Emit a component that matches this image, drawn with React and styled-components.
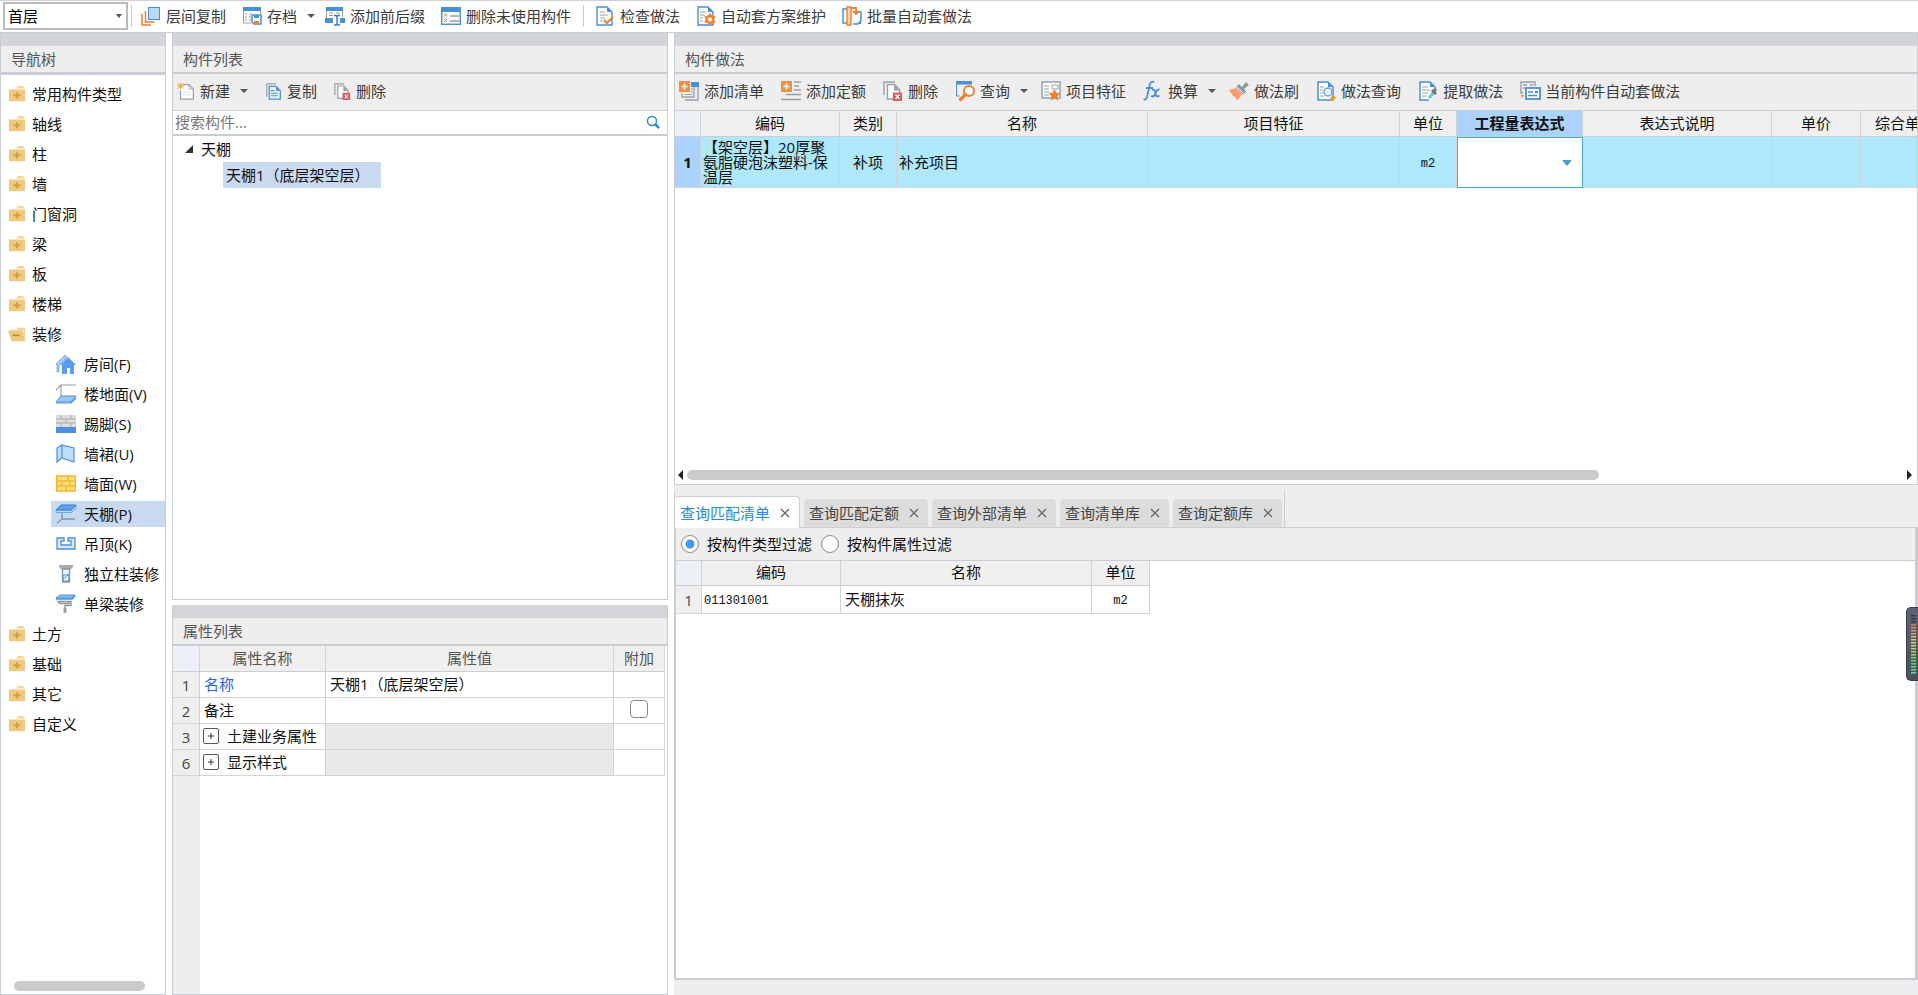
import React from 'react';
import styled, { createGlobalStyle, css } from 'styled-components';

const c = {
  line: '#c9cdd4',
  grid: '#d0d3d8',
  band: '#d3d5db',
  bar: '#eeeeee',
  select: '#c8d9f0',
  blue: '#4a8fdc',
  sky: '#b9d9fb',
  orange: '#f07f2e',
  gray: '#98a0a6',
};

const Global = createGlobalStyle`
  *, *::before, *::after { box-sizing: border-box; }
  body { margin: 0; background: #fff; }
  body, button, input, select, table {
    font-family: "Open Sans", "Noto Sans CJK SC", sans-serif;
    font-size: 15px;
    color: #111;
  }
  button { border: 0; padding: 0; background: none; white-space: nowrap; text-align: left; }
  ul { list-style: none; margin: 0; padding: 0; }
`;

/* ---------- page frame ---------- */
const Page = styled.div`
  height: 100vh;
  display: flex;
  flex-direction: column;
  overflow: hidden;
  border-top: 1px solid #cfd2d9;
`;
const TopBar = styled.header`
  flex: none;
  height: 32px;
  display: flex;
  align-items: center;
  padding: 0 0 1px 3px;
  border-bottom: 1px solid ${c.line};
`;
const Main = styled.main`
  flex: 1;
  min-height: 0;
  display: grid;
  grid-template-columns: 166px 496px minmax(0, 1fr);
  column-gap: 6px;
`;
const Stack = styled.div`
  min-height: 0;
  min-width: 0;
  display: grid;
  grid-template-rows: minmax(0, ${(p) => p.$top}fr) minmax(0, ${(p) => p.$bottom}fr);
  row-gap: ${(p) => p.$gap}px;
`;
const Panel = styled.section`
  min-height: 0;
  min-width: 0;
  overflow: hidden;
  display: flex;
  flex-direction: column;
  border: 1px solid ${c.line};
  border-top: 0;
`;
const Title = styled.h2`
  flex: none;
  margin: 0;
  height: ${(p) => (p.$heavy ? 42 : 41)}px;
  padding-left: 10px;
  border-top: 13px solid ${c.band};
  border-bottom: ${(p) => (p.$heavy ? 3 : 2)}px solid ${c.line};
  background: ${c.bar};
  color: #555;
  font-size: 15px;
  font-weight: 400;
  line-height: 26px;
`;

/* ---------- tool buttons ---------- */
const Tools = styled.div`
  flex: none;
  height: 37px;
  display: flex;
  align-items: center;
  gap: ${(p) => p.$gap || 0}px;
  padding: 0 0 2px ${(p) => (p.$gap ? 5 : 0)}px;
  background: ${c.bar};
  border-bottom: 1px solid ${c.line};
`;
const ToolButton = styled.button`
  flex: none;
  display: flex;
  align-items: center;
  gap: 5px;
  height: 28px;
  padding: 0 ${(p) => p.$end}px 0 ${(p) => p.$start}px;
  color: #3c3c3c;
  line-height: 20px;
`;
const Caret = styled.span`
  margin-left: 5px;
  border: 4px solid transparent;
  border-top: 4px solid #555;
  border-bottom: 0;
`;
const Divider = styled.span`
  width: 1px;
  height: 22px;
  margin: 0 ${(p) => p.$space}px;
  background: #c9c9cc;
`;
const Picker = styled.span`
  display: grid;
  align-items: center;
  width: ${(p) => p.$width};
  height: ${(p) => p.$height};
  background: #fff;
  border: ${(p) => (p.$cell ? '1px solid #4aabd6' : '2px solid #b9bcbf')};
  & > * { grid-area: 1 / 1; }
  & > select {
    width: 100%;
    height: 100%;
    padding: 0 3px;
    border: 0;
    appearance: none;
    background: transparent;
    color: #000;
  }
  & > i {
    justify-self: end;
    margin-right: ${(p) => (p.$cell ? 10 : 4)}px;
    border: ${(p) => (p.$cell ? 5 : 3)}px solid transparent;
    border-top: ${(p) => (p.$cell ? '6px solid #4d9bcb' : '4px solid #555')};
    border-bottom: 0;
    pointer-events: none;
  }
`;

/* ---------- navigation ---------- */
const NavScroll = styled.nav`
  flex: 1;
  min-height: 0;
  overflow: hidden;
  padding-top: 6px;
`;
const NavList = styled.ul`
  display: flex;
  flex-direction: column;
  gap: 4px;
  & & { margin-top: 4px; }
`;
const NavItem = styled.button`
  display: flex;
  align-items: center;
  gap: ${(p) => (p.$child ? 8 : 6)}px;
  height: 26px;
  margin-left: ${(p) => (p.$child ? 50 : 0)}px;
  padding-left: ${(p) => (p.$child ? 5 : 7)}px;
  width: ${(p) => (p.$child ? 'calc(100% - 50px)' : '100%')};
  background: ${(p) => (p.$active ? c.select : 'transparent')};
  line-height: 20px;
`;
const NavTrack = styled.div`
  flex: none;
  padding: 0 20px 3px 13px;
`;
const Thumb = styled.div`
  height: 10px;
  border-radius: 5px;
  background: #cbcbcb;
  ${(p) => p.$share && css`width: ${p.$share};`}
`;

/* ---------- component list ---------- */
const Search = styled.label`
  flex: none;
  height: 25px;
  display: flex;
  align-items: center;
  padding: 0 7px 1px 2px;
  border-bottom: 2px solid ${c.line};
  & > input {
    flex: 1;
    min-width: 0;
    padding: 0;
    border: 0;
    outline: 0;
    line-height: 20px;
  }
  & > input::placeholder { color: #777; opacity: 1; }
`;
const TreeRow = styled.button`
  display: flex;
  align-items: center;
  gap: 7px;
  height: 26px;
  line-height: 20px;
  margin-left: ${(p) => (p.$leaf ? 50 : 11)}px;
  padding-left: ${(p) => (p.$leaf ? 3 : 0)}px;
  width: ${(p) => (p.$leaf ? '158px' : 'auto')};
  background: ${(p) => (p.$leaf ? c.select : 'transparent')};
`;

/* ---------- tables ---------- */
const Scroller = styled.div`
  flex: 1;
  min-height: 0;
  overflow: hidden;
  ${(p) => p.$gutter && css`background: linear-gradient(to right, ${c.bar} 27px, #fff 27px);`}
`;
const Table = styled.table`
  table-layout: fixed;
  border-collapse: separate;
  border-spacing: 0;
  width: ${(p) => p.$width};
  line-height: 20px;
`;
const Head = styled.th`
  height: ${(p) => p.$h}px;
  padding: 0 0 2px;
  background: ${(p) => (p.$on ? '#abd3fd' : p.$corner ? '#edf1f7' : '#efefef')};
  border-right: 1px solid ${c.grid};
  border-bottom: 1px solid ${c.line};
  color: ${(p) => (p.$soft ? '#555' : '#111')};
  font-weight: ${(p) => (p.$on ? 700 : 400)};
  white-space: nowrap;
`;
const RowNo = styled.th`
  padding: 0;
  background: ${(p) => (p.$on ? '#abd3fd' : '#efefef')};
  border-right: 1px solid ${c.grid};
  border-bottom: 1px solid ${c.grid};
  color: ${(p) => (p.$on ? '#111' : '#444')};
  font-weight: ${(p) => (p.$on ? 700 : 400)};
`;
const Cell = styled.td`
  height: ${(p) => p.$h}px;
  padding: 0 2px;
  background: ${(p) => p.$fill || '#fff'};
  border-right: 1px solid ${c.grid};
  border-bottom: 1px solid ${c.grid};
  text-align: ${(p) => (p.$center ? 'center' : 'left')};
  ${(p) => p.$tight && css`line-height: 15px;`}
  ${(p) => p.$bare && css`padding: 0; border: 0;`}
`;
const Mono = styled.span`
  font-family: "Liberation Mono", monospace;
  font-size: 12px;
`;
const PropName = styled.span`
  display: flex;
  align-items: center;
  gap: 8px;
  padding: 0 0 2px ${(p) => (p.$group ? 1 : 2)}px;
  color: ${(p) => (p.$link ? '#2a63f6' : '#111')};
`;
const Expand = styled.button`
  display: grid;
  width: 16px;
  height: 16px;
  place-items: center;
  border: 1px solid #555;
  border-radius: 2px;
  & > svg { display: block; }
`;
const Check = styled.input`
  appearance: none;
  display: block;
  width: 18px;
  height: 18px;
  margin: 0 auto 3px;
  border: 1px solid #888;
  border-radius: 4px;
  background: #fff;
`;
const HScroll = styled.div`
  flex: none;
  height: 17px;
  display: flex;
  align-items: center;
  gap: 4px;
  padding: 0 5px 1px 3px;
`;
const Track = styled.div`
  flex: 1;
`;
const ArrowEnd = styled.span`
  border: 5px solid transparent;
  border-left-width: 0;
  border-right-width: 0;
  ${(p) => (p.$right ? 'border-left: 5px solid #222;' : 'border-right: 5px solid #222;')}
`;

/* ---------- query area ---------- */
const Lower = styled.section`
  min-height: 0;
  display: flex;
  flex-direction: column;
  background: ${c.bar};
  padding-bottom: 15px;
`;
const TabStrip = styled.div`
  flex: none;
  display: flex;
  height: 43px;
  padding-top: 6px;
  border-bottom: 1px solid ${c.line};
`;
const Tabs = styled.div`
  display: flex;
  align-items: flex-end;
  gap: 4px;
  padding-right: 2px;
  border-left: 1px solid ${c.line};
  border-right: 1px solid ${c.line};
`;
const Tab = styled.div`
  display: flex;
  align-items: center;
  gap: 10px;
  height: ${(p) => (p.$active ? 32 : 28)}px;
  padding: 0 9px 0 5px;
  border-radius: 4px 4px 0 0;
  background: ${(p) => (p.$active ? '#fff' : '#dcdcdc')};
  ${(p) => p.$active && css`margin-bottom: -1px; border: 1px solid ${c.line}; border-width: 1px 1px 0 0;`}
  & > button { line-height: 20px; color: ${(p) => (p.$active ? '#2a86e8' : '#444')}; }
  & > button + button { height: 16px; }
`;
const Results = styled.div`
  flex: 1;
  min-height: 0;
  display: flex;
  flex-direction: column;
  border: 2px solid ${c.line};
  border-width: 0 3px 2px 2px;
  background: #fff;
`;
const Filters = styled.div`
  flex: none;
  display: flex;
  align-items: center;
  gap: 9px;
  height: 33px;
  padding-left: 5px;
  background: ${c.bar};
  border-bottom: 1px solid ${c.line};
`;
const Radio = styled.label`
  display: flex;
  align-items: center;
  gap: 8px;
  line-height: 20px;
  & > input {
    appearance: none;
    width: 18px;
    height: 18px;
    margin: 0;
    border: 1px solid #888;
    border-radius: 50%;
    background: #fff;
  }
  & > input:checked { background: radial-gradient(circle, #3f97f6 0 4px, #fff 5px); }
`;
const Meter = styled.aside`
  position: fixed;
  right: 0;
  top: 61%;
  width: 12px;
  height: 74px;
  display: flex;
  justify-content: flex-end;
  align-items: center;
  padding-right: 2px;
  border: 1px solid #3c404e;
  border-right: 0;
  border-radius: 5px 0 0 5px;
  background: linear-gradient(#5d6375, #4c515d);
`;

/* ---------- drawings ---------- */
const doc = 'M2 1h10l5 5v13H2z';
const ICONS = {
  layers: <><path d="M1 8v11h9M4.500 5v11h9" fill="none" stroke={c.orange} strokeWidth="1.500" /><rect x="7.500" y="1.500" width="11" height="12" fill={c.sky} stroke={c.blue} /></>,
  archive: <><path d="M1 1h18v4H1z" fill={c.blue} /><path d="M1.500 5v12H9M18.500 5v3M3 8h2m2 0h3M3 11h2m2 0h2M3 14h2m2 0h2" fill="none" stroke={c.gray} /><path d="M10 9h9v9h-7l-2-2z" fill="#fff" stroke={c.blue} strokeWidth="1.500" /><path d="M12 9h5v3h-5z" fill={c.blue} /><path d="M12 15h5v3h-5z" fill={c.orange} /></>,
  affix: <><path d="M1 1h17v4H1z" fill={c.blue} /><path d="M1.500 5v7M17.500 5v6M4 7h4m3 0h4M4 9.500h4" fill="none" stroke={c.gray} /><path d="M0 12h8v5H0zM15 12h5v5h-5z" fill={c.blue} /><path d="M9 9.500h2l1 1 1-1h2M9 19h2l1-1 1 1h2M12 10v9" fill="none" stroke="#2f78c8" strokeWidth="1.400" /></>,
  unused: <><rect x=".7" y="1.700" width="18.600" height="16.600" fill="#f6fafe" stroke={c.blue} strokeWidth="1.400" /><path d="M0 1h20v5H0z" fill={c.blue} /><path d="M3 7.500l3 3m0-3l-3 3M3 13l3 3m0-3l-3 3" stroke={c.orange} /><path d="M9 10h9M9 15h9" stroke={c.gray} strokeWidth="1.300" /></>,
  check: <><path d={doc} fill="#fff" stroke={c.blue} strokeWidth="1.400" /><path d="M12 1v5h5z" fill={c.blue} /><path d="M5 6h5M5 9h8M5 12h5M5 15h3" stroke={c.gray} /><path d="M9 14l3 3 6-6" fill="none" stroke={c.orange} strokeWidth="2" /></>,
  gear: <><path d={doc} fill="#fff" stroke={c.blue} strokeWidth="1.400" /><path d="M12 1v5h5z" fill={c.blue} /><path d="M4 6h6M4 9h5M4 12h3M4 15h3" stroke={c.gray} /><circle cx="14" cy="13.500" r="3.500" fill="#fff" stroke={c.orange} strokeWidth="2.400" /><path d="M14 7.500v12M8.800 10.500l10.400 6M8.800 16.500l10.400-6" stroke={c.orange} strokeWidth="2" /><circle cx="14" cy="13.500" r="2" fill="#fff" /></>,
  batch: <><path d="M5 3H1v14h4M14 6h5v9l-3 3h-5" fill="none" stroke={c.blue} strokeWidth="1.500" /><path d="M19 14v4h-4z" fill={c.blue} /><path d="M5 1h4v18H5z" fill="#fbd6b8" stroke={c.orange} strokeWidth="1.400" /><path d="M9 2h5v6m-3-3l3 3 3-3" fill="none" stroke={c.orange} strokeWidth="1.800" /></>,
  create: <><path d="M6 2h7l5 5v12H3V9" fill="#fff" stroke={c.gray} strokeWidth="1.400" /><path d="M13 2v5h5" fill="none" stroke={c.gray} /><path d="M6 11h9M6 14h9" stroke="#dde1e4" /><path d="M3 0v7M-1 3.500h8M0 .500l6 6M6 .500l-6 6" stroke="#f59a23" strokeWidth="1.100" /></>,
  copy: <><path d="M2 16V1h11" fill="none" stroke={c.gray} strokeWidth="1.400" /><path d="M5 4h8l5 5v10H5z" fill="#eaf4ff" stroke={c.blue} strokeWidth="1.500" /><path d="M13 4v5h5z" fill={c.blue} /><path d="M7 9h4M7 12h8M7 15h8" stroke={c.blue} strokeWidth="1.300" /></>,
  remove: <><path d="M1 14V1h11" fill="none" stroke={c.gray} strokeWidth="1.400" /><path d="M4.500 3.500h7l5 5V18h-12z" fill="#fff" stroke={c.gray} strokeWidth="1.400" /><path d="M11 3.500v6h5.500z" fill={c.gray} /><path d="M10 11.500h9V20h-9z" fill="#dc5a5f" /><path d="M12.500 13.500l4 4.500m0-4.500l-4 4.500" stroke="#fff" strokeWidth="1.200" /></>,
  addList: <><path d="M12 1h8v5h-8z" fill={c.blue} /><path d="M6 19h13V6M3 12v4h12V6" fill="none" stroke={c.gray} strokeWidth="1.300" /><path d="M6 13.500h7M12 8h2m-2 3h2" stroke={c.gray} /><path d="M0 0h11v11H0z" fill="#f0913f" /><path d="M5.500 2.500v6M2.500 5.500h6" stroke="#fff" strokeWidth="1.500" /></>,
  addQuota: <><path d="M13 1h7M13 5h5M13 9h7M5 13.500h15M0 18.500h20" stroke={c.gray} strokeWidth="1.500" /><path d="M0 0h11v11H0z" fill="#f0913f" /><path d="M5.500 2.500v6M2.500 5.500h6" stroke="#fff" strokeWidth="1.500" /></>,
  query: <><path d="M1 0h16v3.500H1z" fill={c.blue} /><path d="M1.500 3v12h3" fill="none" stroke={c.blue} /><circle cx="14" cy="10" r="5" fill="#fff" stroke={c.orange} strokeWidth="2" /><path d="M10.500 13.500l-5 5" stroke={c.orange} strokeWidth="3.200" strokeLinecap="round" /></>,
  feature: <><rect x="1" y="1" width="18" height="16" fill="#fff" stroke={c.gray} strokeWidth="1.500" /><path d="M3 5h5M3 8h5M3 11h5M3 14h5M11 4h6v4h-6z" fill="none" stroke={c.gray} /><path d="M13.500 8l1.800 3.800 4.200.5-3.100 2.900.8 4.200-3.700-2-3.700 2 .8-4.200-3.100-2.900 4.200-.5z" fill={c.orange} /></>,
  fx: <path d="M11 1.500c-2-2-4 0-4.500 3L4 16c-.5 2.500-2 3-3.500 2M3 7h7M9 9c3-1.500 3 1 3.500 3.500s1.500 4 4 2M16.500 8.500c-3-.5-3.500 3-4.500 5s-2 2.500-4 1.500" fill="none" stroke={c.blue} strokeWidth="1.800" />,
  brush: <><path d="M0 9l7-2 6 6-4 6-2-1-1-2-2-1z" fill="#ff9a6c" /><path d="M7 6l3-3 3 3 4-5 3 3-5 4 2 3-3 3z" fill="#8a98a2" /><path d="M8 6l7 7" stroke="#eee" /></>,
  docQuery: <><path d={doc} fill="#fff" stroke={c.blue} strokeWidth="1.500" /><path d="M12 1v5h5z" fill={c.blue} /><path d="M4 6h4M4 9h3M4 12h3M4 15h4" stroke={c.gray} /><circle cx="12" cy="11" r="4" fill="#eaf4ff" stroke="#6ba0dc" strokeWidth="1.400" /><path d="M17 14l3 3-3 3-3-3z" fill="#f6971f" /></>,
  extract: <><path d="M17 9V6l-5-5H2v18h9" fill="#fff" stroke={c.blue} strokeWidth="1.500" /><path d="M12 1v5h5z" fill={c.blue} /><path d="M4 6h6M4 9h8M4 12h6M4 15h5" stroke={c.gray} /><path d="M11 17l5-6" stroke="#6cc7cf" strokeWidth="3" /><path d="M14 9l4 4M15 11l3-3" stroke="#68767f" strokeWidth="3" /></>,
  current: <><path d="M3 12H1V1h14v4M3 4h4m3 0h3M3 7h2" fill="none" stroke={c.gray} strokeWidth="1.400" /><path d="M1 14l3 0-2 3z" fill={c.orange} /><rect x="6" y="7" width="14" height="11" fill="#fff" stroke={c.blue} strokeWidth="1.800" /><path d="M8 11h5M8 14.500h9" stroke={c.blue} strokeWidth="1.500" /><path d="M15 10h3v2h-3z" fill={c.blue} /></>,
  folder: <><path d="M11 1h6l2 3H9z" fill="#f3d596" /><path d="M1 5h18v13H1z" fill="#efc97f" /><path d="M10 8v7M6 11.500h8" stroke="#cf9f3f" strokeWidth="2" /></>,
  folderOpen: <><path d="M10 3h9v13h-2V6H3V5h7z" fill="#f3d596" /><path d="M0 6h16l3 12H4z" fill="#efc97f" /><path d="M5 11.500h8" stroke="#b98a34" strokeWidth="1.800" /></>,
  house: <><path d="M0 10l9-9 2 2-8 8v7H1v-7z" fill="#a9cdf6" stroke="#6aa5ea" strokeWidth=".8" /><path d="M12 3l8 8h-2v9h-4v-6h-3v6H6v-9H4z" fill="#5a9df0" /></>,
  floor: <><path d="M0 6l5-5h15M5 1v11" fill="none" stroke="#98a0a6" strokeWidth="1.200" /><path d="M5 12h15l-5 6H0z" fill="#9cc8f7" stroke={c.blue} /><path d="M0 19h15l5-5" fill="none" stroke={c.blue} strokeWidth="1.200" /></>,
  skirting: <><path d="M0 1h20v12H0z" fill="#dcdcdc" /><path d="M0 5h20M0 9h20M5 1v4M15 1v4M10 5v4M5 9v4M15 9v4" stroke="#aaa" /><path d="M0 13h20v6H0z" fill="#4a90e2" /></>,
  dado: <path d="M6 1v13l-5 4V4zM6 1l12 3v14L6 14z" fill="#bfdcfb" stroke={c.blue} strokeWidth="1.200" />,
  wall: <><path d="M.7 2h18.600v15H.7z" fill="#ffdf85" stroke="#f5b52a" strokeWidth="1.400" /><path d="M0 7h20M0 12h20M12 2v5M6 7v5M14 7v5M10 12v5" stroke="#f5b52a" strokeWidth="1.400" /></>,
  ceiling: <><path d="M5 1h15l-5 5H0z" fill="#5fa2ea" stroke="#2f7fd0" /><path d="M0 6.500h15l5-5v3l-5 4H0z" fill="#b9d9fb" stroke={c.blue} strokeWidth=".7" /><path d="M6 9v6l-5 4M6 15h13" fill="none" stroke="#8297a8" strokeWidth="1.400" /></>,
  drop: <path d="M1 4h7v3H5v4h10V7h-3V4h7v11H1z" fill="#d9eafd" stroke={c.blue} strokeWidth="1.300" />,
  column: <><path d="M3 1h14v2l-3 3H6L3 3z" fill="#a7adb2" /><path d="M6.500 5h7v13h-7z" fill="#edf5fe" stroke="#8a949c" strokeWidth="1.300" /><path d="M7 11h6v6H7zM7 15l6-5" fill="none" stroke={c.blue} /></>,
  beam: <><path d="M4 1h15l-3 3H0z" fill="#8fc1f5" stroke={c.blue} /><path d="M0 5h16l3-3" fill="none" stroke={c.blue} strokeWidth="1.500" /><path d="M2 7.500h11v2H4zM13 7.500h2v4H9v3" fill="none" stroke="#8e969c" strokeWidth="1.400" /><path d="M7.500 14h3v5h-3z" fill="#98a0a6" /></>,
};
const Svg = styled.svg`
  flex: none;
  display: block;
  overflow: visible;
`;
const Icon = ({ name, size = 20 }) => (
  <Svg width={size} height={size} viewBox="0 0 20 20" aria-hidden="true">{ICONS[name]}</Svg>
);

const Tool = ({ icon, label, drop, size, start = 0, end = 0 }) => (
  <ToolButton type="button" $start={start} $end={drop ? Math.max(end - 4, 0) : end}>
    <Icon name={icon} size={size} />
    {label}
    {drop && <Caret />}
  </ToolButton>
);

const NAV = [
  ['常用构件类型'], ['轴线'], ['柱'], ['墙'], ['门窗洞'], ['梁'], ['板'], ['楼梯'],
  ['装修', [
    ['house', '房间(F)'], ['floor', '楼地面(V)'], ['skirting', '踢脚(S)'], ['dado', '墙裙(U)'], ['wall', '墙面(W)'],
    ['ceiling', '天棚(P)'], ['drop', '吊顶(K)'], ['column', '独立柱装修'], ['beam', '单梁装修'],
  ]],
  ['土方'], ['基础'], ['其它'], ['自定义'],
];
const METHOD_TOOLS = [
  ['addList', '添加清单'], ['addQuota', '添加定额'], ['remove', '删除'], ['query', '查询', true], ['feature', '项目特征'],
  ['fx', '换算', true], ['brush', '做法刷'], ['docQuery', '做法查询'], ['extract', '提取做法'], ['current', '当前构件自动套做法'],
];
const METHOD_COLS = [
  ['', 26], ['编码', 139], ['类别', 57], ['名称', 251], ['项目特征', 252], ['单位', 57],
  ['工程量表达式', 126], ['表达式说明', 189], ['单价', 89], ['综合单价', 89],
];
const TABS = ['查询匹配清单', '查询匹配定额', '查询外部清单', '查询清单库', '查询定额库'];
const PROPS = [
  { no: 1, name: '名称', value: '天棚1（底层架空层）', link: true },
  { no: 2, name: '备注', check: true },
  { no: 3, name: '土建业务属性', group: true },
  { no: 6, name: '显示样式', group: true },
];
const AQUA = '#aee8fa';

function Navigation() {
  return (
    <Panel>
      <Title $heavy>导航树</Title>
      <NavScroll>
        <NavList>
          {NAV.map(([label, children]) => (
            <li key={label}>
              <NavItem type="button">
                <Icon name={children ? 'folderOpen' : 'folder'} size={18} />
                {label}
              </NavItem>
              {children && (
                <NavList>
                  {children.map(([icon, text]) => (
                    <li key={text}>
                      <NavItem type="button" $child $active={icon === 'ceiling'}>
                        <Icon name={icon} />
                        {text}
                      </NavItem>
                    </li>
                  ))}
                </NavList>
              )}
            </li>
          ))}
        </NavList>
      </NavScroll>
      <NavTrack><Thumb /></NavTrack>
    </Panel>
  );
}

function ComponentList() {
  return (
    <Panel>
      <Title>构件列表</Title>
      <Tools $gap={17}>
        <Tool icon="create" label="新建" drop size={17} />
        <Tool icon="copy" label="复制" size={17} />
        <Tool icon="remove" label="删除" size={17} />
      </Tools>
      <Search>
        <input type="text" placeholder="搜索构件..." aria-label="搜索构件" />
        <Svg width="14" height="14" viewBox="0 0 14 14" fill="none" stroke="#2e8fc8">
          <circle cx="6" cy="6" r="4.500" strokeWidth="1.500" />
          <path d="M9 9l4 4" strokeWidth="2.500" />
        </Svg>
      </Search>
      <TreeRow type="button">
        <Svg width="10" height="10" viewBox="0 0 10 10"><path d="M9 1v8H1z" fill="#333" /></Svg>
        天棚
      </TreeRow>
      <TreeRow type="button" $leaf>天棚1（底层架空层）</TreeRow>
    </Panel>
  );
}

function Properties() {
  return (
    <Panel>
      <Title>属性列表</Title>
      <Scroller $gutter>
        <Table $width="calc(100% - 2px)">
          <colgroup>
            <col width="27" /><col width="126" /><col /><col width="51" />
          </colgroup>
          <thead>
            <tr>
              <Head $h={26} $corner />
              <Head $h={26} $soft>属性名称</Head>
              <Head $h={26} $soft>属性值</Head>
              <Head $h={26} $soft>附加</Head>
            </tr>
          </thead>
          <tbody>
            {PROPS.map((p) => (
              <tr key={p.no}>
                <RowNo>{p.no}</RowNo>
                <Cell $h={26}>
                  <PropName $link={p.link} $group={p.group}>
                    {p.group && (
                      <Expand type="button" aria-label={`展开${p.name}`}>
                        <Svg width="8" height="8" viewBox="0 0 8 8"><path d="M4 1v6M1 4h6" stroke="#333" /></Svg>
                      </Expand>
                    )}
                    {p.name}
                  </PropName>
                </Cell>
                <Cell $h={26} $fill={p.group && '#e9e9e9'}>{p.value && <PropName>{p.value}</PropName>}</Cell>
                <Cell $h={26}>{p.check && <Check type="checkbox" aria-label="附加备注" />}</Cell>
              </tr>
            ))}
          </tbody>
        </Table>
      </Scroller>
    </Panel>
  );
}

function Methods() {
  return (
    <Panel>
      <Title>构件做法</Title>
      <Tools>
        {METHOD_TOOLS.map(([icon, label, drop], i) => (
          <Tool key={label} icon={icon} label={label} drop={drop} start={i ? 8 : 4} end={9} />
        ))}
      </Tools>
      <Scroller>
        <Table $width="1275px">
          <colgroup>{METHOD_COLS.map(([n, w]) => <col key={n} width={w} />)}</colgroup>
          <thead>
            <tr>{METHOD_COLS.map(([n]) => <Head key={n} $h={26} $corner={!n} $on={n === '工程量表达式'}>{n}</Head>)}</tr>
          </thead>
          <tbody>
            <tr>
              <RowNo $on>1</RowNo>
              <Cell $h={51} $fill={AQUA} $tight>【架空层】20厚聚氨脂硬泡沫塑料-保温层</Cell>
              <Cell $fill={AQUA} $center>补项</Cell>
              <Cell $fill={AQUA}>补充项目</Cell>
              <Cell $fill={AQUA} />
              <Cell $fill={AQUA} $center><Mono>m2</Mono></Cell>
              <Cell $bare>
                <Picker $cell $width="100%" $height="51px">
                  <select aria-label="工程量表达式"><option> </option></select>
                  <i />
                </Picker>
              </Cell>
              <Cell $fill={AQUA} />
              <Cell $fill={AQUA} />
              <Cell $fill={AQUA} />
            </tr>
          </tbody>
        </Table>
      </Scroller>
      <HScroll>
        <ArrowEnd />
        <Track><Thumb $share="75%" /></Track>
        <ArrowEnd $right />
      </HScroll>
    </Panel>
  );
}

function Query() {
  return (
    <Lower>
      <TabStrip>
        <Tabs>
          {TABS.map((t, i) => (
            <Tab key={t} $active={i === 0}>
              <button type="button">{t}</button>
              <button type="button" aria-label={`关闭${t}`}>
                <Svg width="10" height="10" viewBox="0 0 10 10"><path d="M1 1l8 8M9 1L1 9" stroke="#666" strokeWidth="1.300" /></Svg>
              </button>
            </Tab>
          ))}
        </Tabs>
      </TabStrip>
      <Results>
        <Filters>
          <Radio><input type="radio" name="filter" defaultChecked />按构件类型过滤</Radio>
          <Radio><input type="radio" name="filter" />按构件属性过滤</Radio>
        </Filters>
        <Table $width="474px">
          <colgroup><col width="26" /><col width="139" /><col width="251" /><col width="58" /></colgroup>
          <thead>
            <tr><Head $h={25} $corner /><Head $h={25}>编码</Head><Head $h={25}>名称</Head><Head $h={25}>单位</Head></tr>
          </thead>
          <tbody>
            <tr>
              <RowNo>1</RowNo>
              <Cell $h={28}><Mono>011301001</Mono></Cell>
              <Cell $h={28}><PropName>天棚抹灰</PropName></Cell>
              <Cell $h={28} $center><Mono>m2</Mono></Cell>
            </tr>
          </tbody>
        </Table>
      </Results>
    </Lower>
  );
}

const meterColor = (i) => (i < 3 ? '#333748' : `hsl(${10 + (i - 3) * 9}, 65%, 62%)`);

export default function App() {
  return (
    <>
      <Global />
      <Page>
        <TopBar>
          <Picker $width="125px" $height="28px">
            <select aria-label="楼层"><option>首层</option></select>
            <i />
          </Picker>
          <Divider $space={3} />
          <Tool icon="layers" label="层间复制" start={6} end={8} />
          <Tool icon="archive" label="存档" drop start={8} end={6} />
          <Tool icon="affix" label="添加前后缀" start={8} end={8} />
          <Tool icon="unused" label="删除未使用构件" start={8} end={8} />
          <Divider $space={4} />
          <Tool icon="check" label="检查做法" start={7} end={8} />
          <Tool icon="gear" label="自动套方案维护" start={8} end={8} />
          <Tool icon="batch" label="批量自动套做法" start={8} end={8} />
        </TopBar>
        <Main>
          <Navigation />
          <Stack $top={567} $bottom={390} $gap={5}>
            <ComponentList />
            <Properties />
          </Stack>
          <Stack $top={452} $bottom={510} $gap={0}>
            <Methods />
            <Query />
          </Stack>
        </Main>
        <Meter aria-label="音量">
          <Svg width="5" height="58" viewBox="0 0 5 58">
            {Array.from({ length: 20 }, (_, i) => <rect key={i} y={i * 3} width="5" height="1.500" fill={meterColor(i)} />)}
          </Svg>
        </Meter>
      </Page>
    </>
  );
}
